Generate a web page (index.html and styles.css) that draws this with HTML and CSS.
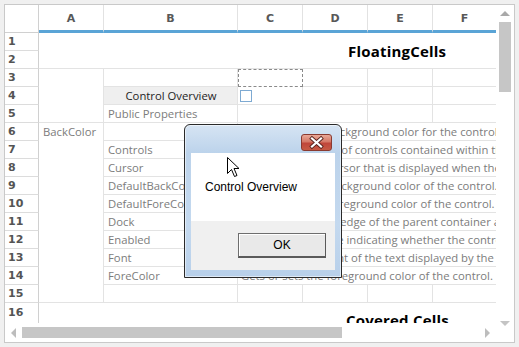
FILE: index.html
```html
<!DOCTYPE html>
<html>
<head>
<meta charset="utf-8">
<link rel="stylesheet" href="styles.css">
</head>
<body>
<div class="sheet">
  <div class="viewport">
    <div class="grid">
      <div class="hd corner"></div>
      <div class="hd">A</div>
      <div class="hd">B</div>
      <div class="hd">C</div>
      <div class="hd">D</div>
      <div class="hd">E</div>
      <div class="hd last">F</div>

      <div class="rh">1</div>
      <div class="c title-cell"><span class="big">FloatingCells</span></div>
      <div class="rh">2</div>

      <div class="rh">3</div>
      <div class="c span-r3"></div>
      <div class="c"></div>
      <div class="c focus"></div>
      <div class="c"></div>
      <div class="c"></div>
      <div class="c last"></div>

      <div class="rh">4</div>
      <div class="c heading">Control Overview</div>
      <div class="c"><span class="check"></span></div>
      <div class="c"></div>
      <div class="c"></div>
      <div class="c last"></div>

      <div class="rh">5</div>
      <div class="c">Public Properties</div>
      <div class="c"></div>
      <div class="c"></div>
      <div class="c"></div>
      <div class="c last"></div>

      <div class="rh">6</div>
      <div class="c span-r10 top">BackColor</div>
      <div class="c"></div>
      <div class="c desc">Gets or sets the background color for the control.</div>

      <div class="rh">7</div>
      <div class="c">Controls</div>
      <div class="c desc">Gets the collection of controls contained within the control.</div>

      <div class="rh">8</div>
      <div class="c">Cursor</div>
      <div class="c desc">Gets or sets the cursor that is displayed when the mouse pointer is over the control.</div>

      <div class="rh">9</div>
      <div class="c">DefaultBackColor</div>
      <div class="c desc">Gets the default background color of the control.</div>

      <div class="rh">10</div>
      <div class="c">DefaultForeColor</div>
      <div class="c desc">Gets the default foreground color of the control.</div>

      <div class="rh">11</div>
      <div class="c">Dock</div>
      <div class="c desc">Gets or sets which edge of the parent container a control is docked to.</div>

      <div class="rh">12</div>
      <div class="c">Enabled</div>
      <div class="c desc">Gets or sets a value indicating whether the control can respond to user interaction.</div>

      <div class="rh">13</div>
      <div class="c">Font</div>
      <div class="c desc">Gets or sets the font of the text displayed by the control.</div>

      <div class="rh">14</div>
      <div class="c">ForeColor</div>
      <div class="c desc">Gets or sets the foreground color of the control.</div>

      <div class="rh">15</div>
      <div class="c"></div>
      <div class="c"></div>
      <div class="c"></div>
      <div class="c"></div>
      <div class="c last"></div>

      <div class="rh tall">16</div>
      <div class="c covered"><span class="big">Covered Cells</span></div>
    </div>
  </div>
  <div class="vscroll">
    <div class="arrow-box"><span class="tri up"></span></div>
    <div class="vthumb"></div>
    <div class="vfill"></div>
    <div class="arrow-box"><span class="tri down"></span></div>
  </div>
  <div class="hscroll">
    <div class="harrow"><span class="tri left"></span></div>
    <div class="hthumb"></div>
    <div class="hfill"></div>
    <div class="harrow"><span class="tri right"></span></div>
  </div>
</div>

<div class="dialog">
  <div class="close-btn">
    <svg width="31" height="17" viewBox="0 0 31 17">
      <path d="M11 4.5 L20 12.5 M20 4.5 L11 12.5" stroke="#5a2620" stroke-width="4" stroke-linecap="square"/>
      <path d="M11 4.5 L20 12.5 M20 4.5 L11 12.5" stroke="#ffffff" stroke-width="2.2" stroke-linecap="square"/>
    </svg>
  </div>
  <div class="client">
    <div class="msg">Control Overview</div>
    <div class="btn-area"><div class="ok-btn">OK</div></div>
  </div>
</div>

<svg class="cursor" width="13" height="21" viewBox="0 0 13 21">
  <path d="M0.5 0.5 L0.5 16.5 L4.5 12.5 L7.5 19.5 L10 18.5 L7 11.5 L12 11.5 Z" fill="#ffffff" stroke="#000000" stroke-width="1" stroke-linejoin="miter"/>
</svg>
</body>
</html>
```

FILE: styles.css
```css
html, body {
  margin: 0;
  padding: 0;
  background: #f0f0f0;
}

body {
  width: 519px;
  height: 347px;
  overflow: hidden;
  font-family: "Open Sans", "Liberation Sans", sans-serif;
}

.sheet {
  margin: 4px 0 0 4px;
  width: 511px;
  height: 339px;
  box-sizing: border-box;
  border: 1px solid #c9c9c9;
  background: #ffffff;
  display: grid;
  grid-template-columns: 491px 18px;
  grid-template-rows: 318px 19px;
}

.viewport {
  grid-column: 1;
  grid-row: 1;
  overflow: hidden;
  background: #ffffff;
}

.grid {
  display: grid;
  grid-template-columns: 34px 65px 134px 65px 65px 65px 63px;
  grid-template-rows: 28px repeat(15, 18px) 38px;
}

.hd {
  box-sizing: border-box;
  border-right: 1px solid #e2e2e2;
  border-bottom: 3px solid #5aa4d6;
  display: flex;
  align-items: center;
  justify-content: center;
  font-family: "DejaVu Sans", sans-serif;
  font-weight: bold;
  font-size: 11px;
  color: #585858;
  padding-top: 1px;
}

.hd.corner {
  border-bottom: 1px solid #d0d0d0;
  border-right: 1px solid #d0d0d0;
}

.hd.last {
  border-right: none;
}

.rh {
  grid-column: 1;
  box-sizing: border-box;
  border-right: 1px solid #d0d0d0;
  border-bottom: 1px solid #dcdcdc;
  display: flex;
  align-items: center;
  padding-left: 3px;
  font-family: "DejaVu Sans", sans-serif;
  font-weight: bold;
  font-size: 11px;
  color: #545454;
}

.rh.tall {
  align-items: flex-start;
  padding-top: 3px;
  border-bottom: none;
}

.c {
  box-sizing: border-box;
  border-right: 1px solid #e3e3e3;
  border-bottom: 1px solid #e3e3e3;
  display: flex;
  align-items: center;
  padding: 0 3px 0 4px;
  white-space: nowrap;
  font-size: 11.3px;
  color: #7c7c7c;
  min-width: 0;
}

.c.last {
  border-right: none;
}

.title-cell {
  grid-column: span 6;
  grid-row: span 2;
  border-right: none;
  padding-left: 309px;
}

.big {
  font-weight: bold;
  font-size: 15px;
  color: #000000;
  letter-spacing: 0.2px;
}

.span-r3 {
  grid-row: span 3;
}

.span-r10 {
  grid-row: span 10;
}

.top {
  align-items: flex-start;
  padding-top: 1px;
}

.focus {
  border: 1px dashed #8a8a8a;
}

.heading {
  background: #efefef;
  justify-content: center;
  color: #1e1e1e;
}

.check {
  width: 10px;
  height: 10px;
  border: 1px solid #7eaad2;
  background: #ffffff;
  margin-left: -2px;
}

.desc {
  grid-column: span 4;
  border-right: none;
  padding-left: 3px;
  overflow: hidden;
}

.covered {
  grid-column: span 6;
  border-right: none;
  border-bottom: none;
  align-items: flex-start;
  padding-top: 7px;
  padding-left: 307px;
}

/* scrollbars */
.vscroll {
  grid-column: 2;
  grid-row: 1 / 3;
  display: flex;
  flex-direction: column;
  background: #ffffff;
}

.arrow-box {
  height: 17px;
  display: flex;
  align-items: center;
  justify-content: center;
}

.vscroll .arrow-box:last-child {
  margin-bottom: 10px;
}

.vthumb {
  width: 12px;
  height: 70px;
  margin-left: 3px;
  background: #c6c6c6;
}

.vfill {
  flex: 1;
}

.hscroll {
  grid-column: 1;
  grid-row: 2;
  display: flex;
  align-items: center;
  background: #ffffff;
}

.harrow {
  width: 17px;
  height: 19px;
  display: flex;
  align-items: center;
  justify-content: center;
}

.hthumb {
  width: 320px;
  height: 11px;
  background: #c6c6c6;
}

.hfill {
  flex: 1;
}

.tri {
  width: 0;
  height: 0;
  display: block;
}

.tri.up {
  border-left: 5px solid transparent;
  border-right: 5px solid transparent;
  border-bottom: 5px solid #a9a9a9;
}

.tri.down {
  border-left: 5px solid transparent;
  border-right: 5px solid transparent;
  border-top: 5px solid #c4c4c4;
}

.tri.left {
  border-top: 5px solid transparent;
  border-bottom: 5px solid transparent;
  border-right: 5px solid #bdbdbd;
}

.tri.right {
  border-top: 5px solid transparent;
  border-bottom: 5px solid transparent;
  border-left: 5px solid #bdbdbd;
}

/* dialog */
.dialog {
  position: absolute;
  left: 184px;
  top: 124px;
  width: 158px;
  height: 154px;
  box-sizing: border-box;
  border: 1px solid #2a2a2a;
  border-radius: 6px 6px 0 0;
  background: linear-gradient(#d6e4f3 0px, #bcd3eb 28px, #c4d9ef 100px, #b8d0ea 152px);
  box-shadow: inset 0 0 0 1px rgba(255, 255, 255, 0.55);
  padding: 28px 6px 7px 6px;
  display: flex;
}

.close-btn {
  position: absolute;
  left: 116px;
  top: 9px;
  width: 31px;
  height: 17px;
  box-sizing: border-box;
  border: 1px solid #8a3a30;
  border-radius: 3px;
  background: linear-gradient(#e9a897 0%, #d47866 45%, #c0463a 55%, #c65a44 100%);
  overflow: hidden;
}

.close-btn svg {
  display: block;
  margin: -1px 0 0 -1px;
}

.client {
  flex: 1;
  display: flex;
  flex-direction: column;
  font-family: "Liberation Sans", sans-serif;
  font-size: 12px;
  color: #000000;
}

.msg {
  height: 68px;
  box-sizing: border-box;
  background: #ffffff;
  padding: 27px 0 0 14px;
  line-height: 14px;
}

.btn-area {
  flex: 1;
  background: #f0f0f0;
  padding: 12px 0 0 47px;
}

.ok-btn {
  width: 88px;
  height: 25px;
  box-sizing: border-box;
  border: 1px solid #6e6e6e;
  border-right-color: #5a5a5a;
  border-bottom: 2px solid #5a5a5a;
  background: #e9e9e9;
  box-shadow: inset 1px 1px 0 #ffffff;
  display: flex;
  align-items: center;
  justify-content: center;
  font-size: 12px;
  color: #000000;
}

.cursor {
  position: absolute;
  left: 227px;
  top: 157px;
}
```
